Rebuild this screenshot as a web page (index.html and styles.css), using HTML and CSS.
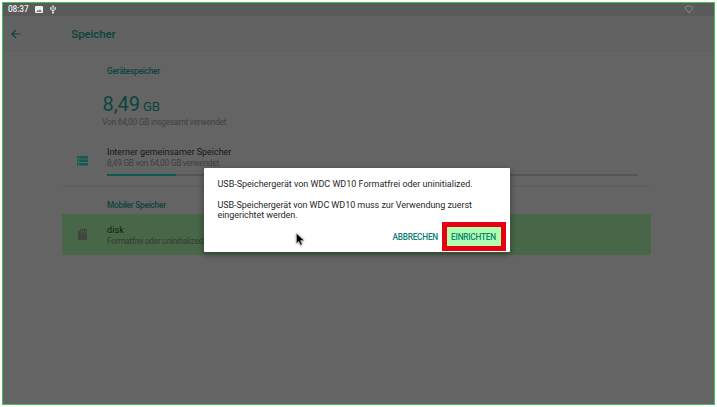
FILE: index.html
```html
<!DOCTYPE html>
<html lang="de">
<head>
<meta charset="utf-8">
<title>Speicher</title>
<link rel="stylesheet" href="styles.css">
</head>
<body>
<div class="screen">
  <header class="status">
    <span class="clock">08:37</span>
    <svg class="picture" viewBox="0 0 8 8"><path fill="#eee" fill-rule="evenodd" d="M1 0h6a1 1 0 0 1 1 1v5a1 1 0 0 1-1 1H1a1 1 0 0 1-1-1V1a1 1 0 0 1 1-1zM1.300 5.800h5.500L5 3.400 3.600 5.100 2.600 4.100z"/></svg>
    <svg class="usb" viewBox="0 0 8 10"><path fill="none" stroke="#e4e4e4" d="M4 1.500v7M1.500 3.500v1.700L4 6.500l2.500-1.300V3"/><path fill="#e4e4e4" d="M4 0l1.500 2h-3zM.7 2.600h1.600v1.600H.7zM5.700 2.600h1.600v1.600H5.700z"/><circle cx="4" cy="8.600" r="1.100" fill="#e4e4e4"/></svg>
    <svg class="wifi" viewBox="0 0 10 9"><path fill="none" stroke="#8d8d8d" stroke-width=".9" d="M.8 2.600Q5-.8 9.200 2.600L5 8z"/></svg>
  </header>
  <nav class="toolbar">
    <svg class="back" viewBox="0 0 10 10"><path fill="none" stroke="#0b443d" stroke-width="1.200" d="M9.500 5H1M5 .8L.9 5 5 9.200"/></svg>
    <h1>Speicher</h1>
  </nav>
  <main>
    <h2>Gerätespeicher</h2>
    <div class="total"><span class="amount">8,49</span><span class="unit">GB</span></div>
    <p class="summary">Von 64,00 GB insgesamt verwendet</p>
    <section class="row internal">
      <svg class="storage" viewBox="0 0 11 10"><path fill="#0b5b51" d="M0 0h11v2.500H0zM0 3.500h11V6H0zM0 7h11v2.500H0z"/><path fill="#5c7773" d="M1 .8h1.200v1H1zM1 4.300h1.200v1H1zM1 7.800h1.200v1H1z"/></svg>
      <div class="detail">
        <h3>Interner gemeinsamer Speicher</h3>
        <p>8,49 GB von 64,00 GB verwendet</p>
        <div class="bar"><div class="used"></div></div>
      </div>
    </section>
    <h2 class="mobile">Mobiler Speicher</h2>
    <section class="row disk">
      <svg class="card" viewBox="0 0 9 11"><path fill="#414641" fill-rule="evenodd" d="M3 0h5a1 1 0 0 1 1 1v9a1 1 0 0 1-1 1H1a1 1 0 0 1-1-1V3zM3 1.500v2h1v-2zM5 1.500v2h1v-2zM7 1.500v2h1v-2z"/></svg>
      <div class="detail">
        <h3>disk</h3>
        <p>Formatfrei oder uninitialized</p>
      </div>
    </section>
  </main>
  <div class="dialog">
    <p class="first">USB-Speichergerät von WDC WD10 Formatfrei oder uninitialized.</p>
    <p class="second">USB-Speichergerät von WDC WD10 muss zur Verwendung zuerst<br>eingerichtet werden.</p>
    <div class="actions">
      <button class="cancel">ABBRECHEN</button>
      <button class="setup">EINRICHTEN</button>
    </div>
  </div>
  <svg class="cursor" viewBox="0 0 9 13"><path fill="#000" stroke="#bbb" stroke-width=".6" d="M.5.5v10l2.300-2.200 1.700 3.900 1.600-.7L4.500 7.600h3.600z"/></svg>
</div>
</body>
</html>
```

FILE: styles.css
```css
* { box-sizing: border-box; }
body { margin: 0; padding: 2px; background: #fff; font-family: Roboto, sans-serif; }
h1, h2, h3, p { margin: 0; font-weight: 400; white-space: nowrap; }
svg { display: block; flex: none; }
.screen { position: relative; width: 713px; height: 403px; border: 1px solid #3fc353; background: #646464; overflow: hidden; }
.status { display: flex; align-items: center; height: 13px; padding: 0 20px 0 5px; background: #5a5a5a; }
.clock { width: 27px; font-size: 8.300px; line-height: 13px; font-weight: 500; letter-spacing: -.1px; color: #ededed; white-space: nowrap; }
.picture { width: 8px; height: 8px; }
.usb { width: 8px; height: 9px; margin-left: 6px; }
.wifi { width: 10px; height: 9px; margin-left: auto; }
.toolbar { display: flex; align-items: center; height: 36px; padding-left: 8px; background: #626262; border-bottom: 1px solid #5f5f5f; }
.back { width: 10px; height: 10px; }
h1 { margin: 1px 0 0 50.300px; font-size: 11.500px; font-weight: 500; line-height: 15px; letter-spacing: -.12px; color: #0b443d; }
main { width: 589px; margin-left: 59px; padding-top: 14px; }
h2 { margin-left: 45px; font-size: 8.300px; line-height: 11px; letter-spacing: -.25px; font-weight: 500; color: #0b443d; }
.total { display: flex; align-items: baseline; margin: 15px 0 0 40.400px; height: 25px; line-height: 25px; color: #0b443d; }
.amount { font-size: 20px; }
.unit { margin-left: 3px; font-size: 13.300px; letter-spacing: -.3px; }
.summary { margin-left: 40px; font-size: 8.300px; line-height: 11px; letter-spacing: -.2px; color: #414141; }
.row { display: flex; }
.internal { height: 59px; padding-top: 19px; border-bottom: 1px solid #5d5d5d; }
.storage { width: 11px; height: 10px; margin: 9px 19px 0 15px; }
h3 { font-size: 9px; line-height: 11px; letter-spacing: -.03px; color: #171717; }
.detail p { font-size: 8.300px; line-height: 11px; letter-spacing: -.25px; color: #404040; }
.bar { width: 531px; height: 2px; margin-top: 5px; background: #555; }
.used { width: 13%; height: 2px; background: #0b5b51; }
.mobile { margin-top: 13px; }
.disk { height: 41px; margin-top: 3px; padding-top: 10px; background: #486648; }
.disk h3 { line-height: 12px; letter-spacing: .1px; color: #101c10; }
.disk .detail p { color: #304030; }
.card { width: 9px; height: 11px; margin: 5px 20px 0 16px; }
.dialog { position: absolute; left: 201px; top: 165px; width: 306px; height: 84px; padding: 11px 4px 0 13.500px; background: #fff; border-radius: 1px; box-shadow: 0 2px 7px rgba(0,0,0,.4); color: #282828; }
.dialog p { font-size: 9px; line-height: 10px; letter-spacing: -.02px; }
.dialog .second { margin-top: 11px; letter-spacing: -.06px; }
.actions { display: flex; justify-content: flex-end; align-items: center; margin-top: 2px; }
button { padding: 0; border: 0; background: none; font: 500 8.300px/19px Roboto, sans-serif; letter-spacing: -.25px; color: #0b8174; white-space: nowrap; }
.cancel { padding-top: 2px; }
.setup { width: 64px; height: 29px; margin-left: 4px; padding: 2px 1px 0 0; border: 5px solid #e60012; background: #afffaf; line-height: 17px; }
.cursor { position: absolute; left: 293px; top: 230px; width: 9px; height: 13px; filter: drop-shadow(0 0 1px #999); }
```
